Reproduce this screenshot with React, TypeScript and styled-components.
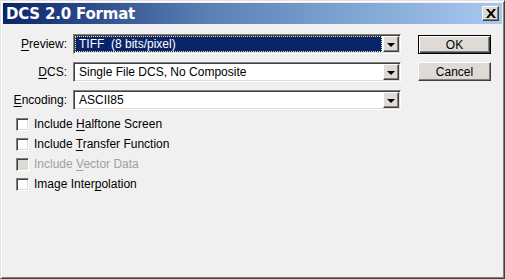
import styled, { createGlobalStyle } from 'styled-components';

const GlobalStyle = createGlobalStyle`
  html, body {
    margin: 0;
    padding: 0;
    background: #f0f0f0;
  }
  * {
    box-sizing: border-box;
  }
`;

const Window = styled.div`
  width: 505px;
  height: 279px;
  background: #f0f0f0;
  border: 1px solid;
  border-color: #e4e1dc #404040 #404040 #e4e1dc;
  box-shadow: inset 1px 1px #fff, inset -1px -1px #808080;
  padding: 2px;
  display: flex;
  flex-direction: column;
  font-family: 'Liberation Sans', Arial, sans-serif;
  font-size: 12px;
  color: #000;
`;

const TitleBar = styled.div`
  height: 21px;
  display: flex;
  align-items: center;
  justify-content: space-between;
  padding: 0 3px 0 3px;
  background: linear-gradient(to right, #0a246a 0%, #5a7eb4 40%, #a6caf0 100%);
`;

const Title = styled.span`
  font-family: 'DejaVu Sans', Verdana, sans-serif;
  font-weight: bold;
  font-size: 15px;
  color: #fff;
  letter-spacing: -0.2px;
`;

const CloseButton = styled.div`
  width: 17px;
  height: 15px;
  background: #dedbd6;
  border: 1px solid;
  border-color: #fff #404040 #404040 #fff;
  box-shadow: inset -1px -1px #808080;
  display: flex;
  align-items: center;
  justify-content: center;
`;

const Body = styled.div`
  flex: 1;
  display: flex;
  gap: 17px;
  padding: 10px 11px 0 8px;
`;

const Form = styled.div`
  width: 392px;
  display: flex;
  flex-direction: column;
`;

const FieldRow = styled.div`
  display: grid;
  grid-template-columns: 56px 1fr;
  column-gap: 6px;
  align-items: center;
  height: 20px;
  margin-bottom: 8px;
`;

const Label = styled.label`
  text-align: right;
  white-space: nowrap;
`;

const Key = styled.span`
  text-decoration: underline;
  text-underline-offset: 2px;
`;

const Combo = styled.div`
  height: 20px;
  display: flex;
  background: #fff;
  border: 1px solid;
  border-color: #808080 #fff #fff #808080;
  box-shadow: inset 1px 1px #404040, inset -1px -1px #dedbd6;
  padding: 1px;
`;

const ComboField = styled.div<{ $focused?: boolean }>`
  flex: 1;
  display: flex;
  align-items: center;
  padding-left: 4px;
  margin-right: 1px;
  white-space: pre;
  background: ${p => (p.$focused ? '#0a246a' : 'transparent')};
  color: ${p => (p.$focused ? '#fff' : '#000')};
  outline: ${p => (p.$focused ? '1px dotted #f0e8a0' : 'none')};
  outline-offset: -1px;
`;

const ComboArrow = styled.div`
  width: 16px;
  background: #dedbd6;
  border: 1px solid;
  border-color: #fff #404040 #404040 #fff;
  box-shadow: inset -1px -1px #808080;
  display: flex;
  align-items: center;
  justify-content: center;
  &::after {
    content: '';
    border-left: 4px solid transparent;
    border-right: 4px solid transparent;
    border-top: 4px solid #000;
    margin-top: 1px;
  }
`;

const Checks = styled.div`
  display: flex;
  flex-direction: column;
  margin-top: -4px;
  padding-left: 5px;
`;

const CheckRow = styled.div<{ $disabled?: boolean }>`
  height: 20px;
  display: flex;
  align-items: center;
  gap: 5px;
  color: ${p => (p.$disabled ? '#a0a0a0' : '#000')};
`;

const Box = styled.span<{ $disabled?: boolean }>`
  width: 13px;
  height: 13px;
  background: ${p => (p.$disabled ? '#dedbd6' : '#fff')};
  border: 1px solid;
  border-color: #808080 #fff #fff #808080;
  box-shadow: inset 1px 1px #404040, inset -1px -1px #dedbd6;
`;

const Buttons = styled.div`
  display: flex;
  flex-direction: column;
  gap: 8px;
  padding-top: 1px;
`;

const Button = styled.div<{ $default?: boolean }>`
  width: 73px;
  height: 19px;
  display: flex;
  align-items: center;
  justify-content: center;
  background: #dedbd6;
  border: 1px solid;
  border-color: ${p => (p.$default ? '#000' : '#fff #404040 #404040 #fff')};
  box-shadow: ${p =>
    p.$default
      ? 'inset 1px 1px #fff, inset -1px -1px #404040, inset -2px -2px #808080'
      : 'inset -1px -1px #808080'};
`;

const fields = [
  { label: 'Preview', key: 'P', rest: 'review:', value: 'TIFF  (8 bits/pixel)', focused: true },
  { label: 'DCS', key: 'D', rest: 'CS:', value: 'Single File DCS, No Composite' },
  { label: 'Encoding', key: 'E', rest: 'ncoding:', value: 'ASCII85' },
];

const checks = [
  { before: 'Include ', key: 'H', after: 'alftone Screen' },
  { before: 'Include ', key: 'T', after: 'ransfer Function' },
  { before: 'Include ', key: 'V', after: 'ector Data', disabled: true },
  { before: 'Image Inter', key: 'p', after: 'olation' },
];

export default function App() {
  return (
    <Window>
      <GlobalStyle />
      <TitleBar>
        <Title>DCS 2.0 Format</Title>
        <CloseButton>
          <svg width="10" height="9" viewBox="0 0 10 9">
            <path d="M0 0h2.5L5 3l2.5-3H10L6.4 4.5 10 9H7.5L5 6 2.5 9H0l3.6-4.5z" fill="#000" />
          </svg>
        </CloseButton>
      </TitleBar>
      <Body>
        <Form>
          {fields.map(f => (
            <FieldRow key={f.label}>
              <Label>
                <Key>{f.key}</Key>
                {f.rest}
              </Label>
              <Combo>
                <ComboField $focused={f.focused}>{f.value}</ComboField>
                <ComboArrow />
              </Combo>
            </FieldRow>
          ))}
          <Checks>
            {checks.map(c => (
              <CheckRow key={c.after} $disabled={c.disabled}>
                <Box $disabled={c.disabled} />
                <span>
                  {c.before}
                  <Key>{c.key}</Key>
                  {c.after}
                </span>
              </CheckRow>
            ))}
          </Checks>
        </Form>
        <Buttons>
          <Button $default>OK</Button>
          <Button>Cancel</Button>
        </Buttons>
      </Body>
    </Window>
  );
}
